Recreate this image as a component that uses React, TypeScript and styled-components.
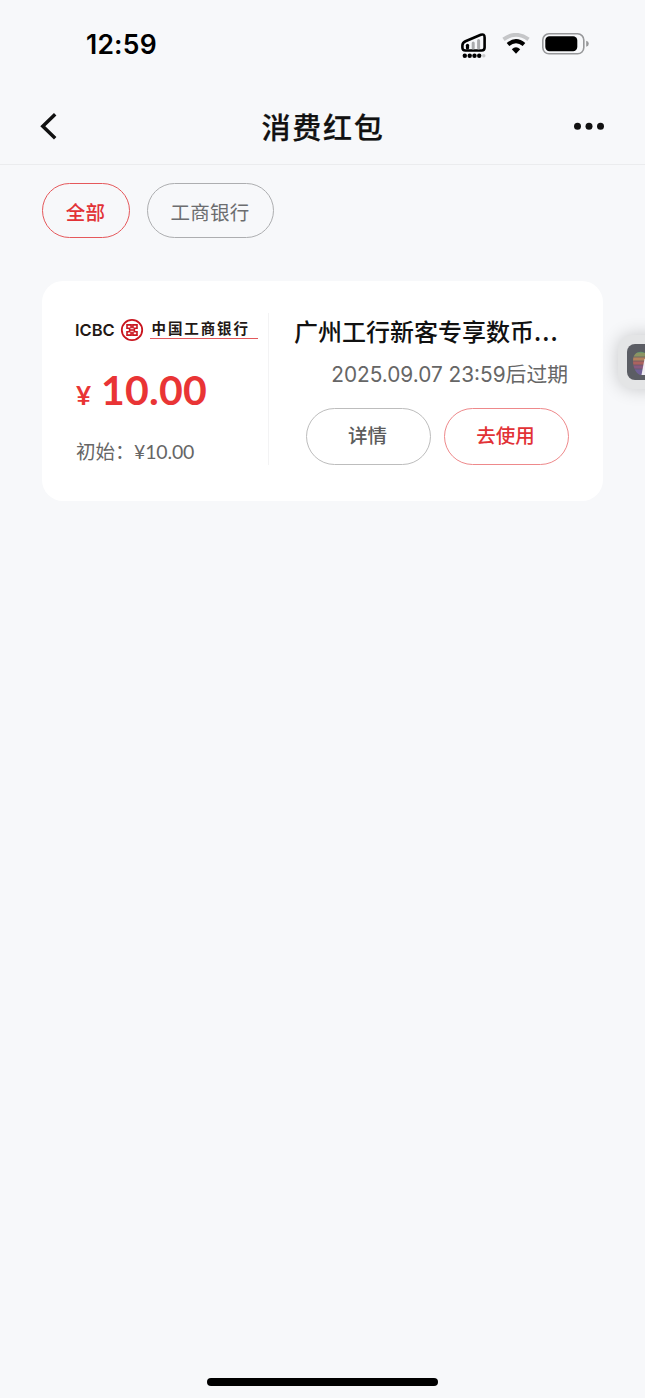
import React from "react";
import styled, { createGlobalStyle } from "styled-components";

const GlobalStyle = createGlobalStyle`
  * { box-sizing: border-box; }
  body {
    margin: 0;
    background: #f7f8fa;
    font-family: Inter, "Noto Sans CJK SC", sans-serif;
    color: #111;
  }
`;

const Screen = styled.div`
  position: relative;
  display: flex;
  flex-direction: column;
  width: 645px;
  height: 1398px;
  overflow: hidden;
  background: #f7f8fa;
`;

const StatusBar = styled.header`
  display: flex;
  justify-content: space-between;
  align-items: center;
  height: 88px;
  padding: 0 56px 0 86px;
`;

const Clock = styled.time`
  font: 600 26.5px/32px Inter, sans-serif;
  letter-spacing: 0.2px;
  color: #000;
`;

const StatusIcons = styled.div`
  display: flex;
  align-items: center;
  height: 32px;
`;

const NavBar = styled.nav`
  display: flex;
  justify-content: space-between;
  align-items: center;
  height: 77px;
  padding: 0 40px;
  border-bottom: 1px solid #ebecee;
`;

const NavButton = styled.button`
  display: flex;
  width: 32px;
  height: 32px;
  padding: 0;
  border: 0;
  background: none;
`;

const PageTitle = styled.h1`
  margin: 0 0 0 1px;
  font: 500 29px/40px "Noto Sans CJK SC", sans-serif;
  letter-spacing: 1.7px;
  -webkit-text-stroke: 0.25px #111;
`;

const Filters = styled.div`
  display: flex;
  gap: 17px;
  padding: 18px 42px 0;
`;

const Chip = styled.button<{ $active?: boolean; $width: number }>`
  width: ${(p) => p.$width}px;
  height: 55px;
  padding: 2px 1px 0 0;
  border: 1px solid ${(p) => (p.$active ? "#e5585b" : "#adaeb0")};
  border-radius: 28px;
  background: transparent;
  color: ${(p) => (p.$active ? "#e23236" : "#6c6d6f")};
  font: ${(p) => (p.$active ? 500 : 400)} 19.5px/28px "Noto Sans CJK SC", sans-serif;
  letter-spacing: 0.2px;
`;

const Card = styled.article`
  display: flex;
  width: 561.5px;
  height: 220px;
  margin: 43px 0 0 41.5px;
  padding: 32px 34px 36px 33.5px;
  border-radius: 21px;
  background: #fff;
`;

const Summary = styled.section`
  display: flex;
  flex-direction: column;
  width: 194px;
  border-right: 1px solid #f3f3f4;
`;

const BankLogo = styled.div`
  display: flex;
  flex: none;
  align-items: center;
  height: 34px;
`;

const Amount = styled.div`
  display: flex;
  flex: none;
  align-items: baseline;
  margin-top: 17px;
  height: 52px;
  color: #e93435;
`;

const Currency = styled.span`
  width: 26px;
  padding-left: 1px;
  font: 700 26px/52px Lato, sans-serif;
`;

const Value = styled.span`
  font: 700 41px/52px Lato, sans-serif;
  letter-spacing: 0.25px;
`;

const Initial = styled.div`
  display: flex;
  flex: none;
  margin-top: 21px;
  padding-left: 1px;
  color: #666;
  font: 400 19.5px/30px Lato, "Noto Sans CJK SC", sans-serif;
`;

const InitialLabel = styled.span`
  width: 58px;
  white-space: nowrap;
`;

const InitialValue = styled.span`
  letter-spacing: -0.15px;
`;

const Details = styled.section`
  display: flex;
  flex: 1;
  flex-direction: column;
  align-items: flex-end;
`;

const CouponName = styled.h2`
  width: 275px;
  margin: 0;
  font: 500 24px/36px "Noto Sans CJK SC", sans-serif;
  color: #111;
  white-space: nowrap;
`;

const Ellipsis = styled.span`
  letter-spacing: 1.1px;
`;

const Expiry = styled.p`
  margin: 10px 1px 0 0;
  color: #666;
  font: 400 20.8px/32px Inter, "Noto Sans CJK SC", sans-serif;
  white-space: nowrap;
`;

const Actions = styled.div`
  display: flex;
  gap: 13px;
  margin: 17px 0 0;
`;

const Action = styled.button<{ $primary?: boolean }>`
  width: 125px;
  height: 56.5px;
  padding: 0 2px 2px 0;
  border: 1px solid ${(p) => (p.$primary ? "#ee898b" : "#bdbdbd")};
  border-radius: 29px;
  background: #fff;
  color: ${(p) => (p.$primary ? "#e23236" : "#5c5c5c")};
  font: 500 19.5px/28px "Noto Sans CJK SC", sans-serif;
`;

const FloatingShortcut = styled.aside`
  position: absolute;
  top: 335px;
  right: -27px;
  width: 54px;
  height: 54px;
  padding: 9px;
  border-radius: 15px;
  background: #e4e5e6;
  box-shadow: 0 0 18px rgba(0, 0, 0, 0.2);
`;

const HomeIndicator = styled.div`
  width: 231px;
  height: 8px;
  margin: auto auto 12px;
  border-radius: 4px;
  background: #000;
`;

const SignalSvg = styled.svg`
  margin-top: 2px;
`;

const SignalIcon = () => (
  <SignalSvg width="25" height="28" viewBox="0 0 25 28">
    <path d="M4.5 10.2 19.8 3.8Q23.6 2.4 23.6 6.4v10.2Q23.6 19.5 20.7 19.5H4.3Q1.4 19.5 1.4 16.6v-2.1Q1.4 11.6 4.5 10.2Z" fill="none" stroke="#000" strokeWidth="2.6" />
    <path d="M6.5 14.3v2.7" stroke="#000" strokeWidth="3.2" strokeLinecap="round" />
    <path d="M12.2 12v5M17.6 9.5V17" stroke="#aaabad" strokeWidth="3" strokeLinecap="round" />
    <g fill="#000">
      <circle cx="3.8" cy="24.8" r="2.2" /><circle cx="8.7" cy="24.8" r="2.2" />
      <circle cx="13.5" cy="24.8" r="2.2" /><circle cx="18.2" cy="24.8" r="2.2" />
    </g>
    <circle cx="22.8" cy="24.8" r="1.7" fill="#c9cacc" />
  </SignalSvg>
);

const WifiSvg = styled.svg`
  margin-left: 16px;
`;

const WifiIcon = () => (
  <WifiSvg width="28" height="22" viewBox="0 0 28 22">
    <path d="M1.5 6.4Q14-2.8 26.5 6.4" fill="none" stroke="#c5c6c8" strokeWidth="3.8" />
    <path d="M6 11.5Q14 4.9 22 11.5" fill="none" stroke="#000" strokeWidth="4.1" />
    <path d="M9.8 16.3Q14 12 18.2 16.3L14 20.8Z" fill="#000" />
  </WifiSvg>
);

const BatterySvg = styled.svg`
  margin-left: 12px;
`;

const BatteryIcon = () => (
  <BatterySvg width="47" height="22" viewBox="0 0 47 22">
    <rect x=".8" y=".8" width="41" height="20" rx="6.2" fill="none" stroke="#97989a" strokeWidth="1.6" />
    <rect x="3.3" y="3.3" width="32" height="15" rx="4.2" />
    <path d="M44.2 7.8Q46.8 8.5 46.8 10.8T44.2 13.8Z" fill="#97989a" />
  </BatterySvg>
);

const LogoLatin = styled.span`
  width: 45px;
  font: 600 16.5px/20px Inter, sans-serif;
  letter-spacing: 0px;
  color: #231815;
`;

const LogoChinese = styled.span`
  flex: none;
  width: 108px;
  height: 21px;
  margin: 0 0 3px 6px;
  padding: 0 0 0 1.5px;
  border-bottom: 1px solid #e2585b;
  font: 700 14.5px/20px "Noto Sans CJK SC", sans-serif;
  letter-spacing: 1.9px;
  white-space: nowrap;
  color: #231815;
`;

const MarkSvg = styled.svg`
  flex: none;
`;

const IcbcMark = () => (
  <MarkSvg width="24" height="24" viewBox="0 0 24 24">
    <circle cx="12" cy="12" r="10.2" fill="none" stroke="#c9151e" strokeWidth="1.8" />
    <g fill="none" stroke="#c9151e" strokeWidth="1.6">
      <path d="M11.1 10.2V6.9H7v3.3h2.6v3.6H7v3.3h4.1v-3.3" />
      <path d="M12.9 10.2V6.9H17v3.3h-2.6v3.6H17v3.3h-4.1v-3.3" />
      <path d="M9.6 12h4.8" />
    </g>
  </MarkSvg>
);

const AppBadge = () => (
  <svg width="36" height="36" viewBox="0 0 36 36">
    <defs>
      <clipPath id="apple">
        <path d="M18 9C13 6 6 8 6 17c0 7 4 14 8 14 2 0 3-1 4-1 7 0 12-6 12-12 0-8-7-12-12-9ZM18 8c0-3 2-5 5-5 0 3-2 5-5 5Z" />
      </clipPath>
    </defs>
    <rect width="36" height="36" rx="8" fill="#5b5d64" />
    <g clipPath="url(#apple)">
      <path d="M4 5h28" stroke="#69976b" strokeWidth="8" />
      <path d="M4 11h28" stroke="#8c9463" strokeWidth="4" />
      <path d="M4 15h28" stroke="#b4825e" strokeWidth="4" />
      <path d="M4 19h28" stroke="#ac625f" strokeWidth="4" />
      <path d="M4 23h28" stroke="#895a80" strokeWidth="4" />
      <path d="M4 29h28" stroke="#6f6096" strokeWidth="8" />
      <path d="M4 13h28M4 17h28M4 21h28M4 25h28" stroke="#5b5d64" strokeWidth=".7" />
    </g>
    <path d="M14.5 31 17.5 15H22v16Z" fill="#f0edf3" />
  </svg>
);

export default function App() {
  return (
    <>
      <GlobalStyle />
      <Screen>
        <StatusBar>
          <Clock>12:59</Clock>
          <StatusIcons>
            <SignalIcon />
            <WifiIcon />
            <BatteryIcon />
          </StatusIcons>
        </StatusBar>
        <NavBar>
          <NavButton aria-label="返回">
            <svg width="32" height="32" viewBox="0 0 32 32">
              <path d="M15.2 4.2 2.8 16.2 15.2 28.2" fill="none" stroke="#111" strokeWidth="3.5" />
            </svg>
          </NavButton>
          <PageTitle>消费红包</PageTitle>
          <NavButton aria-label="更多">
            <svg width="32" height="32" viewBox="0 0 32 32" fill="#111">
              <circle cx="4.5" cy="16.2" r="3.5" /><circle cx="16" cy="16.2" r="3.5" /><circle cx="27.5" cy="16.2" r="3.5" />
            </svg>
          </NavButton>
        </NavBar>
        <Filters>
          <Chip $active $width={88}>全部</Chip>
          <Chip $width={127}>工商银行</Chip>
        </Filters>
        <Card>
          <Summary>
            <BankLogo>
              <LogoLatin>ICBC</LogoLatin>
              <IcbcMark />
              <LogoChinese>中国工商银行</LogoChinese>
            </BankLogo>
            <Amount>
              <Currency>¥</Currency>
              <Value>10.00</Value>
            </Amount>
            <Initial>
              <InitialLabel>初始：</InitialLabel>
              <InitialValue>¥10.00</InitialValue>
            </Initial>
          </Summary>
          <Details>
            <CouponName>广州工行新客专享数币<Ellipsis>...</Ellipsis></CouponName>
            <Expiry>2025.09.07 23:59后过期</Expiry>
            <Actions>
              <Action>详情</Action>
              <Action $primary>去使用</Action>
            </Actions>
          </Details>
        </Card>
        <FloatingShortcut>
          <AppBadge />
        </FloatingShortcut>
        <HomeIndicator />
      </Screen>
    </>
  );
}
